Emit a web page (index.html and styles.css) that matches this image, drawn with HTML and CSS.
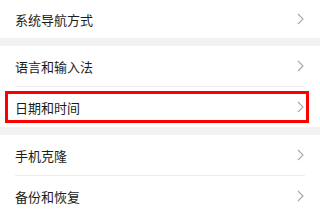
FILE: index.html
```html
<!DOCTYPE html>
<html lang="zh-CN">
<head>
<meta charset="utf-8">
<link rel="stylesheet" href="styles.css">
</head>
<body>
<div class="page">
  <div class="group">
    <div class="row first">
      <span class="label">系统导航方式</span>
      <svg class="chev" viewBox="0 0 7 12"><polyline points="1,1 6,6 1,11"/></svg>
    </div>
  </div>
  <div class="band"></div>
  <div class="group">
    <div class="row">
      <span class="label">语言和输入法</span>
      <svg class="chev" viewBox="0 0 7 12"><polyline points="1,1 6,6 1,11"/></svg>
    </div>
    <div class="divider"></div>
    <div class="row highlighted">
      <span class="label">日期和时间</span>
      <svg class="chev" viewBox="0 0 7 12"><polyline points="1,1 6,6 1,11"/></svg>
      <div class="mark"></div>
    </div>
  </div>
  <div class="band"></div>
  <div class="group">
    <div class="row">
      <span class="label">手机克隆</span>
      <svg class="chev" viewBox="0 0 7 12"><polyline points="1,1 6,6 1,11"/></svg>
    </div>
    <div class="divider"></div>
    <div class="row">
      <span class="label">备份和恢复</span>
      <svg class="chev" viewBox="0 0 7 12"><polyline points="1,1 6,6 1,11"/></svg>
    </div>
  </div>
</div>
</body>
</html>
```
FILE: styles.css
```css
html, body {
  margin: 0;
  padding: 0;
  background: #ffffff;
}
body {
  width: 320px;
  height: 210px;
  overflow: hidden;
  font-family: "Noto Sans CJK SC", "Noto Sans", sans-serif;
}
.page {
  display: flex;
  flex-direction: column;
}
.group {
  display: flex;
  flex-direction: column;
  background: #ffffff;
}
.row {
  position: relative;
  height: 40px;
  display: flex;
  align-items: center;
  justify-content: space-between;
  padding: 0 16px 0 15px;
  box-sizing: border-box;
}
.row.first {
  height: 38px;
}
.label {
  font-size: 13px;
  color: #1c1c1c;
  letter-spacing: 0;
}
.chev {
  width: 7px;
  height: 12px;
  fill: none;
  stroke: #a6a6a6;
  stroke-width: 1.1;
}
.divider {
  height: 1px;
  margin: 0 15px;
  background: #ececec;
}
.band {
  height: 8px;
  background: #f2f2f2;
}
.mark {
  position: absolute;
  left: 5px;
  top: 4px;
  width: 304px;
  height: 32px;
  border: 3px solid #ff0000;
  box-sizing: border-box;
}
```
